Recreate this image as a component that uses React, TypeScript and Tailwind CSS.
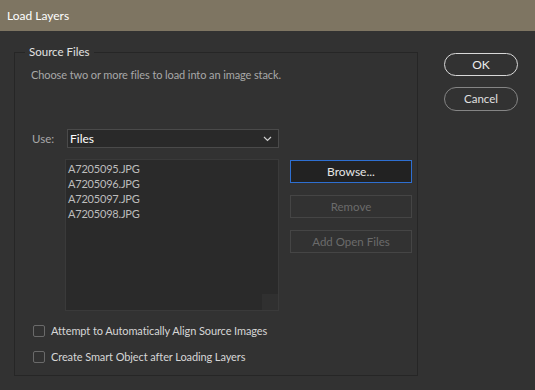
const files = ["A7205095.JPG", "A7205096.JPG", "A7205097.JPG", "A7205098.JPG"]

function SideButton({ label, primary }: { label: string; primary?: boolean }) {
  return (
    <button
      className={
        primary
          ? "h-[23px] w-[122px] border border-[#2e6fd1] bg-[#222222] text-[12px] text-[#e6e6e6]"
          : "h-[23px] w-[122px] border border-[#454545] bg-[#323232] text-[11.5px] text-[#6b6b6b]"
      }
    >
      {label}
    </button>
  )
}

function Check({ label }: { label: string }) {
  return (
    <div className="flex items-center h-[16px] ml-[18px]">
      <span className="w-[12px] h-[12px] border border-[#6a6a6a] rounded-[2px]" />
      <span className="ml-[6px] text-[11px] tracking-[-0.1px] text-[#d6d6d6]">{label}</span>
    </div>
  )
}

export default function App() {
  return (
    <div
      className="w-[535px] h-[390px] bg-[#323232] flex flex-col overflow-hidden"
      style={{ fontFamily: 'Lato, "Noto Sans", sans-serif' }}
    >
      <div className="h-[31px] bg-[#7e7562] flex items-center pl-[7px] text-[12px] text-white">
        Load Layers
      </div>

      <div className="flex flex-row">
        {/* group box */}
        <div className="relative ml-[14px] mt-[21px] w-[404px] h-[324px] border border-[#262626] flex flex-col">
          <span className="absolute -top-[9px] left-[10px] px-[4px] bg-[#323232] text-[11.5px] leading-[16px] text-[#e2e2e2]">
            Source Files
          </span>

          <div className="pt-[14px] pl-[16px] text-[11px] tracking-[-0.1px] leading-[16px] text-[#a8a8a8]">
            Choose two or more files to load into an image stack.
          </div>

          <div className="flex items-center mt-[46px] pl-[17px]">
            <span className="w-[35px] text-[11.5px] text-[#a8a8a8]">Use:</span>
            <div className="w-[212px] h-[19px] bg-[#292929] border border-[#4a4a4a] flex items-center justify-between pl-[2px] pr-[6px]">
              <span className="text-[12px] text-white">Files</span>
              <svg width="9" height="6" viewBox="0 0 9 6" fill="none">
                <path d="M1 1l3.5 3.5L8 1" stroke="#cfcfcf" strokeWidth="1.2" />
              </svg>
            </div>
          </div>

          <div className="flex flex-row mt-[11px] pl-[50px]">
            <div className="relative w-[214px] h-[152px] bg-[#2a2a2a] border border-[#3a3a3a] pt-[1px] pl-[2px]">
              {files.map((f) => (
                <div key={f} className="text-[11px] tracking-[-0.2px] leading-[15px] text-[#bdbdbd]">
                  {f}
                </div>
              ))}
              <span className="absolute right-0 bottom-0 w-[16px] h-[16px] bg-[#303030]" />
            </div>
            <div className="flex flex-col gap-[12px] ml-[11px] mt-[1px]">
              <SideButton label="Browse..." primary />
              <SideButton label="Remove" />
              <SideButton label="Add Open Files" />
            </div>
          </div>

          <div className="mt-[12px]">
            <Check label="Attempt to Automatically Align Source Images" />
          </div>
          <div className="mt-[10px]">
            <Check label="Create Smart Object after Loading Layers" />
          </div>
        </div>

        {/* dialog buttons */}
        <div className="flex flex-col ml-[26px] mt-[22px] gap-[11px]">
          <button className="w-[74px] h-[23px] rounded-full border-[1.5px] border-[#d8d8d8] text-[12px] text-[#ececec]">
            OK
          </button>
          <button className="w-[74px] h-[24px] rounded-full border border-[#858585] text-[11.5px] text-[#e0e0e0]">
            Cancel
          </button>
        </div>
      </div>
    </div>
  )
}
